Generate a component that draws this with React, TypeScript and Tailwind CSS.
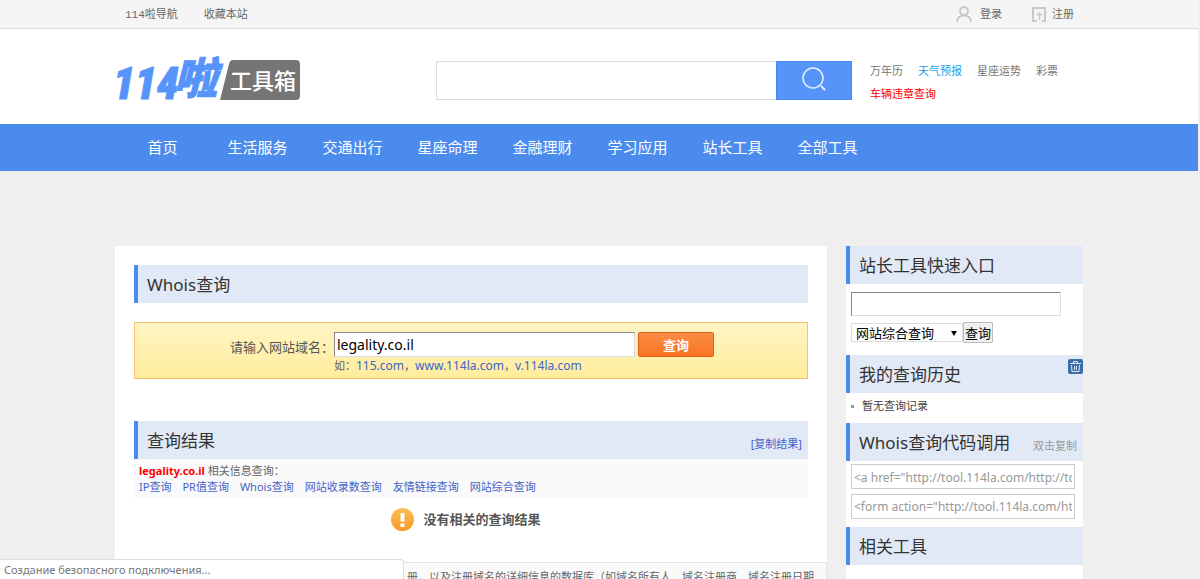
import { ReactNode } from 'react';

const NAV = ['首页', '生活服务', '交通出行', '星座命理', '金融理财', '学习应用', '站长工具', '全部工具'];

const QUICK_LINKS = [
  { text: '万年历', className: 'text-[#777]' },
  { text: '天气预报', className: 'text-[#1ba0e8]' },
  { text: '星座运势', className: 'text-[#777]' },
  { text: '彩票', className: 'text-[#777]' },
];

const RELATED = ['IP查询', 'PR值查询', 'Whois查询', '网站收录数查询', '友情链接查询', '网站综合查询'];

const SNIPPETS = [
  { label: '链接代码', value: '<a href="http://tool.114la.com/http://tool.114la.com/whois">Whois查询</a>' },
  { label: '表单代码', value: '<form action="http://tool.114la.com/http://tool.114la.com/whois" method="get">' },
];

function Logo() {
  return (
    <svg width="186" height="50" viewBox="0 0 186 50" role="img" aria-label="114啦工具箱" className="overflow-visible">
      <path d="M115 8h66a4 4 0 0 1 4 4v32a4 4 0 0 1-4 4h-76l9-36q1-4 4-4Z" fill="#757575" />
      <text
        x="-2"
        y="47"
        fontSize="44"
        fontStyle="italic"
        fontWeight="900"
        fill="#5694fa"
        stroke="#5694fa"
        fontFamily="'Roboto Condensed', Roboto, sans-serif"
      >
        114
      </text>
      <text
        x="59"
        y="42"
        fontSize="43"
        fontStyle="italic"
        fontWeight="900"
        fill="#5694fa"
        stroke="#5694fa"
        fontFamily="'Noto Sans CJK SC', sans-serif"
      >
        啦
      </text>
      <text
        x="115"
        y="37"
        fontSize="22"
        fontWeight="500"
        fill="#fff"
        fontFamily="'Noto Sans CJK SC', sans-serif"
      >
        工具箱
      </text>
    </svg>
  );
}

function PanelTitle({ title, children }: { title: string; children?: ReactNode }) {
  return (
    <div className="relative flex h-[38px] items-center justify-between border-l-4 border-[#4c8bee] bg-[#e2e9f6] pl-[9px] pr-[6px] pt-[2px]">
      <h2 className="text-[17px] leading-6 text-[#333]">{title}</h2>
      {children}
    </div>
  );
}

function TopBar() {
  return (
    <div className="border-b border-[#dedede] bg-[#f5f5f5]">
      <div className="mx-auto flex h-7 w-full max-w-[968px] items-center justify-between pl-[10px] pr-[9px] text-[11px] text-[#666]">
        <div className="flex gap-[26px] pt-[2px] font-['Liberation_Mono','Noto_Sans_CJK_SC',monospace]">
          <a href="#">114啦导航</a>
          <a href="#">收藏本站</a>
        </div>
        <div className="flex gap-[30px]">
          <a href="#" className="flex items-center gap-[8px]">
            <svg width="16" height="16" viewBox="0 0 16 16" fill="none" stroke="#c8c8c8" strokeWidth="2">
              <circle cx="8" cy="5" r="4" />
              <path d="M1 16c0-4 3-6.500 7-6.500s7 2.500 7 6.500" />
            </svg>
            登录
          </a>
          <a href="#" className="flex items-center gap-[6px]">
            <svg width="14" height="15" viewBox="0 0 14 15" fill="none" stroke="#c8c8c8" strokeWidth="2">
              <path d="M5 14H1V1h12v13h-3" />
              <path d="M7.500 13V6M5 8.500 7.500 6 10 8.500" strokeWidth="1.500" />
            </svg>
            注册
          </a>
        </div>
      </div>
    </div>
  );
}

function Header() {
  return (
    <header className="bg-white">
      <div className="mx-auto flex h-[95px] w-full max-w-[968px] items-start pt-[23px]">
        <a href="#" className="shrink-0">
          <Logo />
        </a>
        <form className="ml-[135px] mt-[9px] flex h-[39px] w-[416px]">
          <input
            type="text"
            aria-label="搜索"
            className="min-w-0 flex-1 border border-r-0 border-[#dcdcdc] bg-white px-2 text-sm outline-none"
          />
          <button
            type="button"
            aria-label="搜索"
            className="flex w-[76px] items-center justify-center border border-[#4287f5] bg-[#5694fa] pb-[3px]"
          >
            <svg width="26" height="26" viewBox="0 0 26 26" fill="none" stroke="#e8f0ff" strokeWidth="1.500">
              <circle cx="12" cy="12" r="10" />
              <path d="m20 20 4 4" strokeWidth="2" />
            </svg>
          </button>
        </form>
        <div className="ml-[18px] mt-[7px] text-[11px] leading-[23px]">
          <div className="flex gap-[15px]">
            {QUICK_LINKS.map((link) => (
              <a key={link.text} href="#" className={link.className}>
                {link.text}
              </a>
            ))}
          </div>
          <a href="#" className="text-[#f00]">
            车辆违章查询
          </a>
        </div>
      </div>
    </header>
  );
}

function MainNav() {
  return (
    <nav className="bg-[#4c8bee]">
      <div className="mx-auto flex w-full max-w-[968px]">
        {NAV.map((item) => (
          <a key={item} href="#" className="w-[95px] text-center text-[15px] leading-[47px] text-white">
            {item}
          </a>
        ))}
      </div>
    </nav>
  );
}

function WhoisForm() {
  return (
    <form className="mt-[19px] h-[57px] border border-[#fdc06a] bg-linear-to-b from-[#fff5c4] to-[#ffec9c] pt-[9px]">
      <div className="flex items-center">
        <label htmlFor="domain" className="w-[199px] pt-[5px] text-right text-[13px] leading-5 text-[#555]">
          请输入网站域名：
        </label>
        <input
          id="domain"
          type="text"
          defaultValue="legality.co.il"
          className="h-[25px] w-[301px] border border-b-[#ddd] border-l-[#888] border-r-[#ddd] border-t-[#888] bg-white px-[2px] text-[14px] text-black outline-none"
        />
        <button
          type="button"
          className="ml-[3px] h-[25px] w-[76px] rounded-[2px] border border-[#e0601a] bg-linear-to-b from-[#fb8c44] to-[#f87420] text-[13px] font-bold leading-5 text-white"
        >
          查询
        </button>
      </div>
      <p className="pl-[199px] text-[11px] leading-[17px] text-[#666]">
        如：
        <a href="#" className="text-[12px] text-[#4463c8]">115.com</a>，
        <a href="#" className="text-[12px] text-[#4463c8]">www.114la.com</a>，
        <a href="#" className="text-[12px] text-[#4463c8]">v.114la.com</a>
      </p>
    </form>
  );
}

function Results() {
  return (
    <section className="mt-[42px]">
      <PanelTitle title="查询结果">
        <button type="button" className="mt-[6px] text-[11px] text-[#4463c8]">
          [复制结果]
        </button>
      </PanelTitle>
      <div className="h-[39px] bg-[#fafafa] px-[5px] pt-1 text-[11px] leading-4 text-[#666]">
        <p>
          <strong className="text-[#f00]">legality.co.il</strong> 相关信息查询：
        </p>
        <div className="flex gap-[11px]">
          {RELATED.map((item) => (
            <a key={item} href="#" className="text-[#4463c8]">
              {item}
            </a>
          ))}
        </div>
      </div>
      <div className="mt-[10px] flex items-center justify-center gap-[9px] pr-[10px]">
        <svg width="23" height="23" viewBox="0 0 23 23">
          <defs>
            <linearGradient id="warn" x1="0" y1="0" x2="0" y2="1">
              <stop offset="0" stopColor="#f9bd55" />
              <stop offset="1" stopColor="#fb9a2a" />
            </linearGradient>
          </defs>
          <circle cx="11.500" cy="11.500" r="11.500" fill="url(#warn)" />
          <path d="M9.500 5h4v8.500h-4zM9.500 15.500h4V19h-4z" fill="#fff" />
        </svg>
        <strong className="text-[13px] text-[#555]">没有相关的查询结果</strong>
      </div>
    </section>
  );
}

function Sidebar() {
  return (
    <aside className="w-[237px] shrink-0 bg-white">
      <PanelTitle title="站长工具快速入口" />
      <form className="h-[71px] pl-[5px] pt-2">
        <input
          type="text"
          aria-label="网站域名"
          className="block h-[24px] w-[210px] border border-b-[#ddd] border-l-[#888] border-r-[#ddd] border-t-[#888] px-1 text-[13px] outline-none"
        />
        <div className="mt-[6px] flex items-center">
          <div className="relative">
            <select
              aria-label="查询类型"
              className="block h-[19px] w-[112px] appearance-none border border-[#ddd] bg-white pl-1 text-[13px] leading-4 text-black outline-none"
            >
              <option>网站综合查询</option>
            </select>
            <svg width="6" height="5" viewBox="0 0 6 5" className="pointer-events-none absolute right-[6px] top-[8px]">
              <path d="M0 0h6L3 5z" fill="#000" />
            </svg>
          </div>
          <button
            type="button"
            className="h-[21px] w-[30px] rounded-[1px] border border-[#bbb] bg-[#f0f0f0] text-[13px] leading-4 text-black"
          >
            查询
          </button>
        </div>
      </form>

      <PanelTitle title="我的查询历史">
        <button
          type="button"
          aria-label="清空历史"
          className="absolute right-0 top-1 flex size-[15px] items-center justify-center rounded-[2px] bg-[#3b6ea9]"
        >
          <svg width="11" height="11" viewBox="0 0 11 11" fill="none" stroke="#dfe8f4">
            <path d="M0 2.500h11M3.500 2V.5h4V2M1.500 4l.5 6.500h7L9.500 4M4.500 5v4M6.500 5v4" />
          </svg>
        </button>
      </PanelTitle>
      <ul className="h-[30px] pl-[5px] pt-1 text-[11px] leading-[18px] text-[#444]">
        <li className="flex items-center gap-[8px]">
          <span className="size-[3px] bg-[#999]" />
          暂无查询记录
        </li>
      </ul>

      <PanelTitle title="Whois查询代码调用">
        <span className="mt-[6px] text-[11px] text-[#999]">双击复制</span>
      </PanelTitle>
      <div className="flex h-[66px] flex-col gap-[5px] pl-[5px] pr-2 pt-[3px]">
        {SNIPPETS.map((snippet) => (
          <input
            key={snippet.label}
            type="text"
            readOnly
            aria-label={snippet.label}
            value={snippet.value}
            className="h-[25px] w-full border border-[#ccc] bg-white px-[2px] text-[12px] text-[#999] outline-none"
          />
        ))}
      </div>

      <PanelTitle title="相关工具" />
      <div className="h-10" />
    </aside>
  );
}

export default function App() {
  return (
    <div className="min-h-screen border-r-2 border-[#efefef] bg-[#efefef] font-['Noto_Sans','Noto_Sans_CJK_SC',sans-serif]">
      <TopBar />
      <Header />
      <MainNav />

      <div className="mx-auto mt-[75px] flex w-full max-w-[968px] gap-[19px]">
        <main className="min-w-0 flex-1 bg-white">
          <div className="h-[316px] px-[19px] pt-[19px]">
            <PanelTitle title="Whois查询" />
            <WhoisForm />
            <Results />
          </div>
          <p className="border border-[#e3e3e3] bg-[#fafafa] py-1 pl-[20px] pr-3 text-right text-[11px] leading-5 text-[#666]">
            册，以及注册域名的详细信息的数据库（如域名所有人、域名注册商、域名注册日期
          </p>
        </main>
        <Sidebar />
      </div>

      <div className="fixed bottom-0 left-0 w-[404px] rounded-tr border-r border-t border-[#ddd] bg-white px-1 text-[11px] leading-[19px] text-[#777]">
        Создание безопасного подключения...
      </div>
    </div>
  );
}
